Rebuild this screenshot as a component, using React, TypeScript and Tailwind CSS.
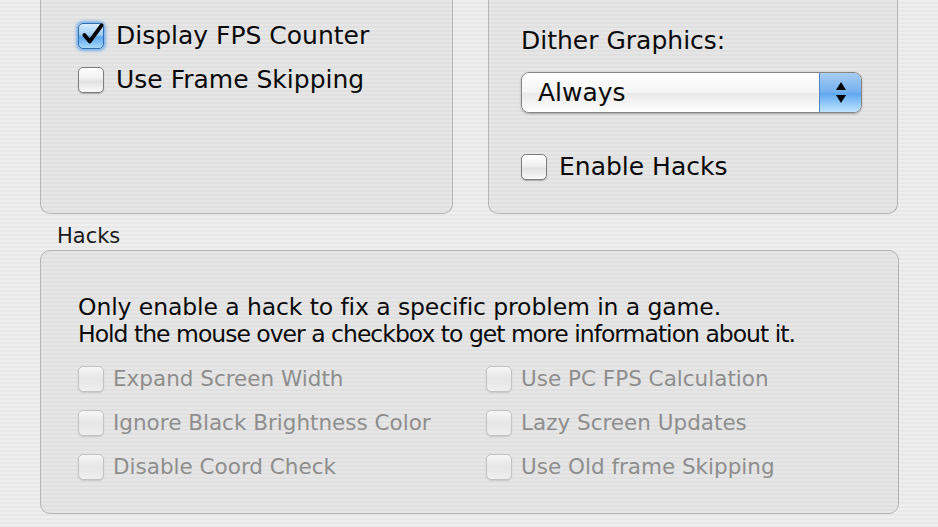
import React from "react";

const font = { fontFamily: '"DejaVu Sans", "Liberation Sans", sans-serif' };

function Checkbox({ checked = false, disabled = false }: { checked?: boolean; disabled?: boolean }) {
  if (checked) {
    return (
      <div className="relative h-[26px] w-[26px] shrink-0 rounded-[5px] border border-[#2f6db5] bg-[linear-gradient(to_bottom,#d8ecfd_0%,#9fcdf6_45%,#5ea8ee_55%,#a9dafc_100%)] shadow-[0_0_3px_2px_rgba(90,160,235,0.75)]">
        <svg viewBox="0 0 26 26" className="absolute -top-[3px] left-0 h-[28px] w-[28px]">
          <path d="M5 13 L10 19 L21 4" fill="none" stroke="#000" strokeWidth="3.6" strokeLinecap="round" strokeLinejoin="round" />
        </svg>
      </div>
    );
  }
  return (
    <div
      className={
        disabled
          ? "h-[26px] w-[26px] shrink-0 rounded-[5px] border border-[#c2c2c2] bg-[linear-gradient(to_bottom,#f6f6f6,#e6e6e6_50%,#efefef)] shadow-[0_1px_1px_rgba(0,0,0,0.12)]"
          : "h-[26px] w-[26px] shrink-0 rounded-[5px] border border-[#7d7d7d] bg-[linear-gradient(to_bottom,#ffffff,#f0f0f0_45%,#e2e2e2_55%,#fafafa)] shadow-[0_1px_1px_rgba(0,0,0,0.25)]"
      }
    />
  );
}

function Row({ label, checked, disabled }: { label: string; checked?: boolean; disabled?: boolean }) {
  return (
    <div className="flex h-[26px] items-center">
      <Checkbox checked={checked} disabled={disabled} />
      <span
        className={
          disabled
            ? "ml-[9px] whitespace-nowrap text-[21.5px] text-[#8e8e8e]"
            : "ml-[12px] whitespace-nowrap text-[25px] text-[#0a0a0a]"
        }
      >
        {label}
      </span>
    </div>
  );
}

const stripes =
  "bg-[repeating-linear-gradient(to_bottom,#efefef_0px,#efefef_2px,#e8e8e8_2px,#e8e8e8_4px)]";
const boxFill =
  "bg-[repeating-linear-gradient(to_bottom,#e6e6e6_0px,#e6e6e6_2px,#e0e0e0_2px,#e0e0e0_4px)]";

export default function App() {
  const hacks = [
    ["Expand Screen Width", "Use PC FPS Calculation"],
    ["Ignore Black Brightness Color", "Lazy Screen Updates"],
    ["Disable Coord Check", "Use Old frame Skipping"],
  ];

  return (
    <div className={`h-[527px] w-[938px] overflow-hidden ${stripes}`} style={font}>
      {/* top group boxes, cut off at the top */}
      <div className="flex gap-[35px] pl-[40px]">
        <div className={`h-[214px] w-[413px] rounded-b-[10px] border-x border-b border-[#b4b4b4] ${boxFill}`}>
          <div className="flex flex-col gap-[18px] pl-[37px] pt-[23px]">
            <Row label="Display FPS Counter" checked />
            <Row label="Use Frame Skipping" />
          </div>
        </div>
        <div className={`h-[214px] w-[410px] rounded-b-[10px] border-x border-b border-[#b4b4b4] ${boxFill}`}>
          <div className="pl-[32px] pt-[26px]">
            <div className="text-[25px] leading-[30px] text-[#0a0a0a]">Dither Graphics:</div>
            <div className="mt-[16px] flex h-[41px] w-[341px] overflow-hidden rounded-[8px] border border-[#868686] shadow-[0_1px_2px_rgba(0,0,0,0.3)]">
              <div className="flex flex-1 items-center bg-[linear-gradient(to_bottom,#ffffff,#f4f4f4_50%,#e9e9e9_52%,#ffffff)] pl-[16px] text-[25px] text-[#0a0a0a]">
                Always
              </div>
              <div className="flex w-[42px] flex-col items-center justify-center gap-[5px] border-l border-[#4f86c8] bg-[linear-gradient(to_bottom,#a7cdf3,#72b0ef_50%,#5ea6ef_52%,#bfe6ff)]">
                <svg width="10" height="8" viewBox="0 0 10 8">
                  <path d="M5 0 L10 8 L0 8 Z" fill="#000" />
                </svg>
                <svg width="10" height="8" viewBox="0 0 10 8">
                  <path d="M0 0 L10 0 L5 8 Z" fill="#000" />
                </svg>
              </div>
            </div>
            <div className="mt-[41px]">
              <Row label="Enable Hacks" />
            </div>
          </div>
        </div>
      </div>

      {/* Hacks group */}
      <div className="ml-[57px] h-[36px] pt-[10px] text-[21px] leading-[24px] text-[#1a1a1a]">Hacks</div>
      <div className={`ml-[40px] h-[264px] w-[859px] rounded-[10px] border border-[#b4b4b4] ${boxFill}`}>
        <div className="pl-[37px] pt-[43px] text-[23.5px] leading-[27px] text-[#0a0a0a]">
          <div className="whitespace-nowrap tracking-[-0.1px]">Only enable a hack to fix a specific problem in a game.</div>
          <div className="whitespace-nowrap tracking-[-1px]">Hold the mouse over a checkbox to get more information about it.</div>
        </div>
        <div className="mt-[18px] grid grid-cols-[408px_1fr] gap-y-[18px] pl-[37px]">
          {hacks.map(([a, b]) => (
            <React.Fragment key={a}>
              <Row label={a} disabled />
              <Row label={b} disabled />
            </React.Fragment>
          ))}
        </div>
      </div>
    </div>
  );
}
